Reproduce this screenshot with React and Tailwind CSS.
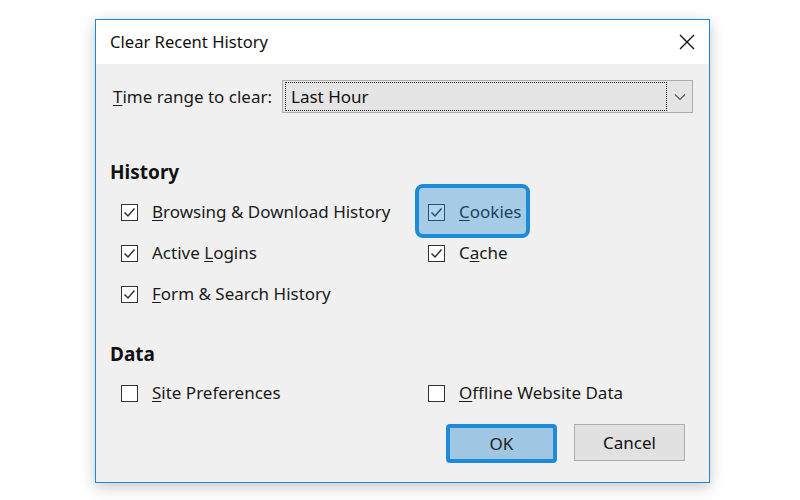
import React from "react";

const font = { fontFamily: '"Noto Sans", "Open Sans", Arial, sans-serif' };

function Check({ checked }) {
  return (
    <span className="w-[17px] h-[17px] border border-[#333333] bg-white flex items-center justify-center shrink-0">
      {checked && (
        <svg width="13" height="13" viewBox="0 0 13 13">
          <polyline points="1.5,6.5 5,10 11.5,2.5" fill="none" stroke="#333333" strokeWidth="1.5" />
        </svg>
      )}
    </span>
  );
}

function Item({ checked, pre = "", u, post = "", highlight }) {
  return (
    <div className="relative flex items-center h-[24px] justify-self-start">
      <Check checked={checked} />
      <span className="ml-[14px] text-[17px] text-[#1a1a1a] whitespace-nowrap">
        {pre}
        <span className="underline underline-offset-2">{u}</span>
        {post}
      </span>
      {highlight && (
        <div className="absolute left-[-13px] right-[-8px] top-[-16px] bottom-[-14px] rounded-[8px] border-4 border-[#1d8bd8] bg-[rgba(30,136,216,0.35)]" />
      )}
    </div>
  );
}

export default function App() {
  return (
    <div className="w-[800px] h-[500px] bg-white overflow-hidden pt-[19px] pl-[95px]" style={font}>
      <div className="w-[615px] h-[464px] border border-[#1b86d8] bg-[#f0f0f0] flex flex-col shadow-[0_4px_14px_rgba(0,0,0,0.22)]">
        <div className="h-[44px] bg-white flex items-center justify-between pl-[14px] pr-[14px]">
          <span className="text-[16.6px] text-[#111]">Clear Recent History</span>
          <svg width="16" height="16" viewBox="0 0 16 16">
            <path d="M1 1 L15 15 M15 1 L1 15" stroke="#111" strokeWidth="1.4" />
          </svg>
        </div>
        <div className="flex-1 flex flex-col pl-[14px] pr-[16px] pt-[16px]">
          <div className="flex items-center">
            <span className="ml-[3px] text-[17px] text-[#1a1a1a] w-[169px] whitespace-nowrap">
              <span className="underline underline-offset-2">T</span>ime range to clear:
            </span>
            <div className="flex-1 h-[33px] border border-[#adadad] bg-[#e5e5e5] flex items-center">
              <div className="flex-1 h-[29px] ml-[2px] border border-dotted border-[#222] flex items-center pl-[5px]">
                <span className="text-[17px] text-[#111]">Last Hour</span>
              </div>
              <div className="w-[25px] flex items-center justify-center">
                <svg width="12" height="8" viewBox="0 0 12 8">
                  <polyline points="1,1.5 6,6.5 11,1.5" fill="none" stroke="#555" strokeWidth="1.2" />
                </svg>
              </div>
            </div>
          </div>

          <div className="mt-[47px] text-[19px] font-bold text-[#111] leading-[24px]">History</div>
          <div className="grid grid-cols-[307px_1fr] gap-y-[17px] mt-[16px] pl-[11px]">
            <Item checked u="B" post="rowsing & Download History" />
            <Item checked u="C" post="ookies" highlight />
            <Item checked pre="Active " u="L" post="ogins" />
            <Item checked pre="C" u="a" post="che" />
            <Item checked u="F" post="orm & Search History" />
            <div />
          </div>

          <div className="mt-[36px] text-[19px] font-bold text-[#111] leading-[24px]">Data</div>
          <div className="grid grid-cols-[307px_1fr] mt-[15px] pl-[11px]">
            <Item u="S" post="ite Preferences" />
            <Item u="O" post="ffline Website Data" />
          </div>

          <div className="flex justify-end gap-[17px] mt-[19px] pr-[8px]">
            <button className="w-[111px] h-[39px] rounded-[4px] border-4 border-[#1d8bd8] bg-[#9fc6e2] text-[17px] text-[#222]">OK</button>
            <button className="w-[111px] h-[37px] border border-[#adadad] bg-[#e1e1e1] text-[17px] text-[#111]">Cancel</button>
          </div>
        </div>
      </div>
    </div>
  );
}
